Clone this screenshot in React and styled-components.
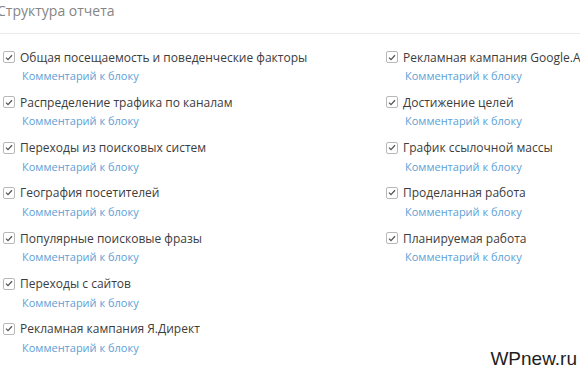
import React from "react";
import styled, { createGlobalStyle } from "styled-components";

const Global = createGlobalStyle`
  html, body { margin: 0; padding: 0; background: #fff; }
  body { font-family: "Open Sans", "Noto Sans", sans-serif; width: 580px; height: 370px; overflow: hidden; }
`;

const Page = styled.div`
  position: relative;
  width: 580px;
  height: 370px;
  overflow: hidden;
`;

const Header = styled.div`
  height: 34px;
  border-bottom: 1px solid #ececec;
  box-sizing: border-box;
  padding: 1px 0 0 0;
  margin-left: -3px;
`;

const Title = styled.h2`
  margin: 0;
  font-weight: 400;
  font-size: 14px;
  line-height: 20px;
  color: #858585;
  white-space: nowrap;
`;

const Columns = styled.div`
  display: grid;
  grid-template-columns: 383px 1fr;
  padding: 14px 0 0 3px;
`;

const Column = styled.div`
  display: flex;
  flex-direction: column;
`;

const Block = styled.div`
  height: 45.33px;
`;

const Label = styled.label`
  display: flex;
  align-items: center;
  gap: 5px;
  height: 18px;
  font-size: 12px;
  color: #3c3c3c;
  white-space: nowrap;
`;

const Box = styled.span`
  width: 12px;
  height: 12px;
  box-sizing: border-box;
  border: 1px solid #b8b8b8;
  border-radius: 2px;
  display: flex;
  align-items: center;
  justify-content: center;
  flex: none;
  background: #fff;
`;

const Comment = styled.a`
  display: block;
  margin-left: 19px;
  height: 19px;
  line-height: 20px;
  font-size: 11px;
  color: #5ea0d6;
  text-decoration: none;
  white-space: nowrap;
`;

const Watermark = styled.div`
  position: absolute;
  right: 3px;
  bottom: 0;
  font-family: "Liberation Sans", Arial, sans-serif;
  font-size: 19px;
  line-height: 22px;
  color: #1e1e1e;
`;

const Check = () => (
  <svg width="8" height="7" viewBox="0 0 8 7">
    <path d="M1 3.6 L3 5.6 L7 1.2" fill="none" stroke="#555" strokeWidth="1.3" />
  </svg>
);

const Item = ({ text }) => (
  <Block>
    <Label>
      <Box><Check /></Box>
      {text}
    </Label>
    <Comment>Комментарий к блоку</Comment>
  </Block>
);

const left = [
  "Общая посещаемость и поведенческие факторы",
  "Распределение трафика по каналам",
  "Переходы из поисковых систем",
  "География посетителей",
  "Популярные поисковые фразы",
  "Переходы с сайтов",
  "Рекламная кампания Я.Директ",
];

const right = [
  "Рекламная кампания Google.AdWords",
  "Достижение целей",
  "График ссылочной массы",
  "Проделанная работа",
  "Планируемая работа",
];

export default function App() {
  return (
    <Page>
      <Global />
      <Header>
        <Title>Структура отчета</Title>
      </Header>
      <Columns>
        <Column>{left.map((t) => <Item key={t} text={t} />)}</Column>
        <Column>{right.map((t) => <Item key={t} text={t} />)}</Column>
      </Columns>
      <Watermark>WPnew.ru</Watermark>
    </Page>
  );
}
